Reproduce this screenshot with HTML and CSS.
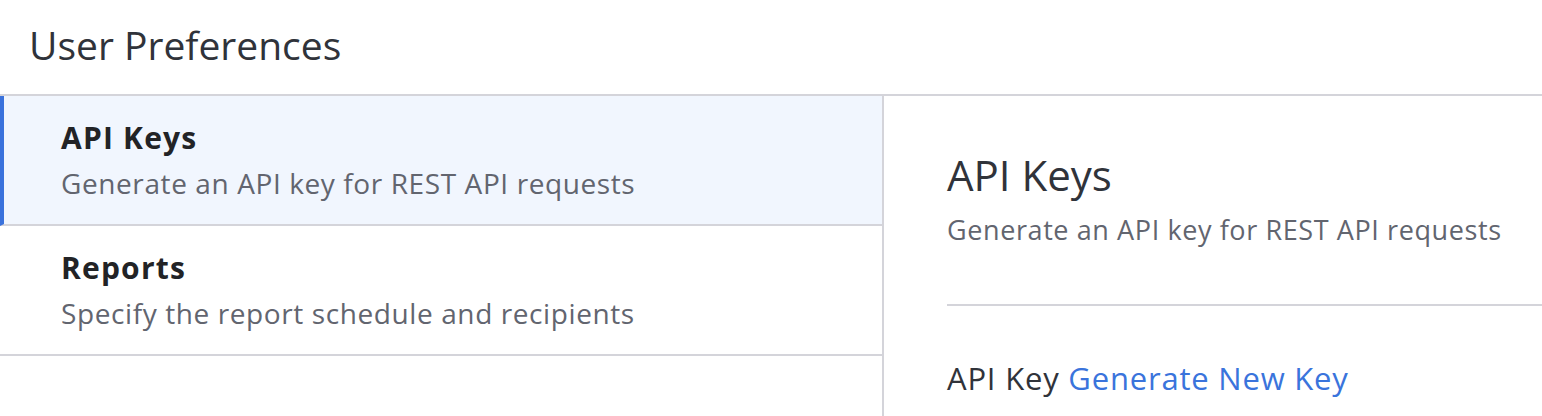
FILE: index.html
```html
<!DOCTYPE html>
<html>
<head>
<meta charset="utf-8">
<link rel="stylesheet" href="styles.css">
</head>
<body>
<header class="page-header">
  <h1 class="page-title">User Preferences</h1>
</header>
<div class="layout">
  <nav class="side-nav">
    <a class="nav-item active">
      <div class="nav-title">API Keys</div>
      <div class="nav-desc">Generate an API key for REST API requests</div>
    </a>
    <a class="nav-item">
      <div class="nav-title">Reports</div>
      <div class="nav-desc">Specify the report schedule and recipients</div>
    </a>
  </nav>
  <section class="content">
    <div class="content-head">
      <h2 class="content-title">API Keys</h2>
      <p class="content-desc">Generate an API key for REST API requests</p>
    </div>
    <div class="key-row">
      <span class="key-label">API Key</span> <a class="key-link">Generate New Key</a>
    </div>
  </section>
</div>
</body>
</html>
```
FILE: styles.css
```css
html, body {
  margin: 0;
  padding: 0;
  background: #ffffff;
  font-family: "Open Sans", "Noto Sans", sans-serif;
  height: 416px;
  overflow: hidden;
}
.page-header {
  border-bottom: 2px solid #d4d4da;
  box-sizing: border-box;
  height: 96px;
  padding-left: 29px;
  display: flex;
  align-items: center;
}
.page-title {
  margin: 0;
  font-size: 39px;
  font-weight: 400;
  color: #30333a;
  padding-bottom: 6px;
}
.layout {
  display: flex;
  height: 320px;
}
.side-nav {
  width: 884px;
  flex: none;
  border-right: 2px solid #d4d4da;
  box-sizing: border-box;
}
.nav-item {
  display: block;
  height: 130px;
  box-sizing: border-box;
  border-bottom: 2px solid #d4d4da;
  padding: 22px 0 0 61px;
}
.nav-item.active {
  background: #f1f6fe;
  border-left: 4px solid #3a72dc;
  padding-left: 57px;
}
.nav-title {
  font-size: 30px;
  font-weight: 700;
  color: #222326;
  line-height: 40px;
  letter-spacing: 1.2px;
}
.nav-desc {
  font-size: 28px;
  color: #62656f;
  line-height: 40px;
  margin-top: 5px;
  letter-spacing: 0.6px;
}
.content {
  flex: 1;
  padding-left: 63px;
}
.content-head {
  border-bottom: 2px solid #d4d4da;
  height: 210px;
  box-sizing: border-box;
  padding-top: 55px;
}
.content-title {
  margin: 0;
  font-size: 42px;
  font-weight: 400;
  color: #30333a;
  line-height: 48px;
}
.content-desc {
  margin: 13px 0 0;
  font-size: 27px;
  color: #62656f;
  line-height: 36px;
  letter-spacing: 0.6px;
}
.key-row {
  padding-top: 52px;
  font-size: 31px;
  line-height: 40px;
  color: #30333a;
  letter-spacing: 0.8px;
}
.key-link {
  color: #3a74dc;
}
```
